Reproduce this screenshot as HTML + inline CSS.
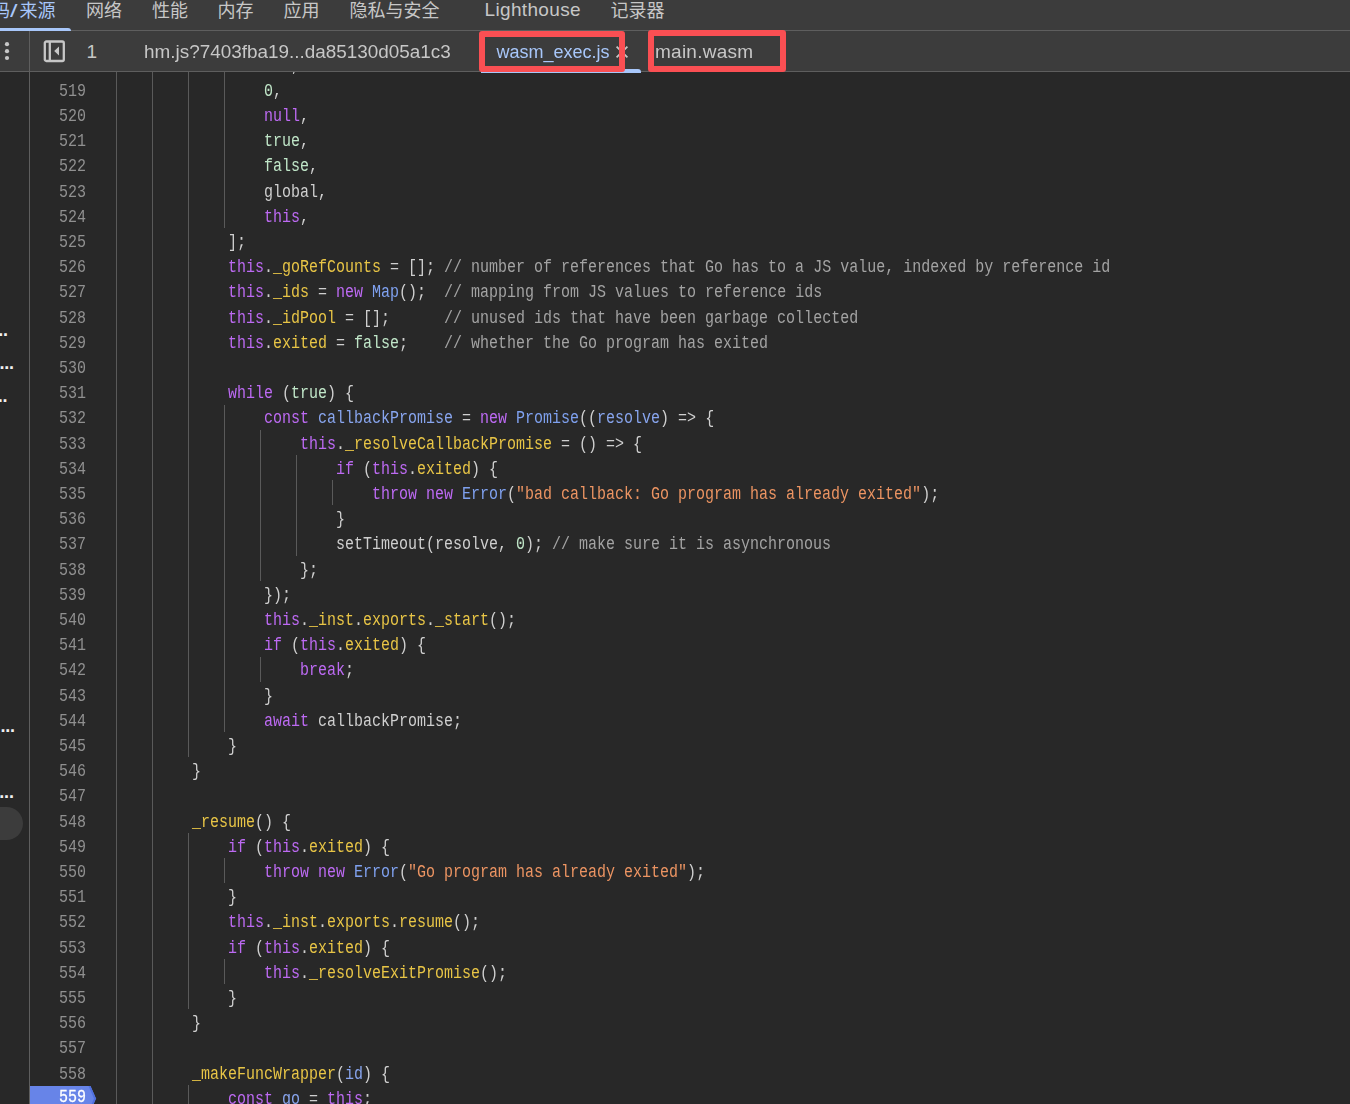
<!DOCTYPE html>
<html lang="zh-CN"><head><meta charset="utf-8"><title>DevTools - wasm_exec.js</title>
<style>
*{box-sizing:border-box;margin:0;padding:0}
html,body{width:1350px;height:1104px;overflow:hidden;background:#282828}
body{position:relative;font-family:"Liberation Sans","Noto Sans CJK SC",sans-serif;color:#c7c7c7}
.abs{position:absolute}
#code{position:absolute;left:0;top:0;width:1350px;height:1104px;overflow:hidden;will-change:transform}
.ln{position:absolute;left:59px;width:40px;text-align:left;transform:scaleX(.83333);transform-origin:0 0;height:25.2px;line-height:25.2px;font-family:"Liberation Mono","Noto Sans CJK SC",monospace;font-size:18px;letter-spacing:0;color:#909090;white-space:pre}
.cl{position:absolute;transform:scaleX(.83333);transform-origin:0 0;height:25.2px;line-height:25.2px;font-family:"Liberation Mono","Noto Sans CJK SC",monospace;font-size:18px;letter-spacing:0;color:#cfcfcf;white-space:pre}
.k{color:#bd6af3}.p{color:#e8c546}.d{color:#88a5ee}.t{color:#7fa1ef}.n{color:#c0e6c8}.s{color:#ec9462}.c{color:#a3a3a3}
.g{position:absolute;width:1px;background:#5a5a5a}
#topbar{position:absolute;left:0;top:0;width:1350px;height:30px;background:#3c3c3c}
#bar2{position:absolute;left:0;top:31px;width:1350px;height:40px;background:#3c3c3c}
.hl{position:absolute;left:0;width:1350px;height:1px;background:#5e5e5e}
.tab{position:absolute;top:0;height:22px;line-height:22px;font-size:18px;white-space:pre;color:#c7c7c7}
.ft{position:absolute;top:41px;height:22px;line-height:22px;font-size:18px;white-space:pre;color:#c7c7c7}
.red{position:absolute;border:6px solid #fa4f53;border-radius:3px}
.dots{position:absolute;font-weight:bold;font-size:18px;line-height:20px;height:20px;color:#f0f0f0;white-space:pre;letter-spacing:-0.15px;font-family:"Liberation Sans",sans-serif}
</style></head><body>
<div id="code">

<div class="g" style="left:116px;top:72px;height:1032px"></div>
<div class="g" style="left:152px;top:72px;height:1032px"></div>
<div class="g" style="left:224px;top:51.8px;height:176.4px"></div>
<div class="g" style="left:224px;top:404.6px;height:327.6px"></div>
<div class="g" style="left:260px;top:429.8px;height:151.2px"></div>
<div class="g" style="left:296px;top:455.0px;height:100.8px"></div>
<div class="g" style="left:332px;top:480.2px;height:25.2px"></div>
<div class="g" style="left:260px;top:656.6px;height:25.2px"></div>
<div class="g" style="left:224px;top:858.2px;height:25.2px"></div>
<div class="g" style="left:224px;top:959.0px;height:25.2px"></div>
<div class="g" style="left:188px;top:26.6px;height:730.8px"></div>
<div class="g" style="left:188px;top:833.0px;height:176.4px"></div>
<div class="g" style="left:188px;top:1085.0px;height:50.4px"></div>
<div class="ln" style="top:53.5px">518</div>
<div class="cl" style="left:264px;top:53.5px"><span class="n">NaN</span>,</div>
<div class="ln" style="top:78.7px">519</div>
<div class="cl" style="left:264px;top:78.7px"><span class="n">0</span>,</div>
<div class="ln" style="top:103.9px">520</div>
<div class="cl" style="left:264px;top:103.9px"><span class="k">null</span>,</div>
<div class="ln" style="top:129.1px">521</div>
<div class="cl" style="left:264px;top:129.1px"><span class="n">true</span>,</div>
<div class="ln" style="top:154.3px">522</div>
<div class="cl" style="left:264px;top:154.3px"><span class="n">false</span>,</div>
<div class="ln" style="top:179.5px">523</div>
<div class="cl" style="left:264px;top:179.5px">global,</div>
<div class="ln" style="top:204.7px">524</div>
<div class="cl" style="left:264px;top:204.7px"><span class="k">this</span>,</div>
<div class="ln" style="top:229.9px">525</div>
<div class="cl" style="left:228px;top:229.9px">];</div>
<div class="ln" style="top:255.1px">526</div>
<div class="cl" style="left:228px;top:255.1px"><span class="k">this</span>.<span class="p">_goRefCounts</span> = []; <span class="c">// number of references that Go has to a JS value, indexed by reference id</span></div>
<div class="ln" style="top:280.3px">527</div>
<div class="cl" style="left:228px;top:280.3px"><span class="k">this</span>.<span class="p">_ids</span> = <span class="k">new</span> <span class="t">Map</span>();  <span class="c">// mapping from JS values to reference ids</span></div>
<div class="ln" style="top:305.5px">528</div>
<div class="cl" style="left:228px;top:305.5px"><span class="k">this</span>.<span class="p">_idPool</span> = [];      <span class="c">// unused ids that have been garbage collected</span></div>
<div class="ln" style="top:330.7px">529</div>
<div class="cl" style="left:228px;top:330.7px"><span class="k">this</span>.<span class="p">exited</span> = <span class="n">false</span>;    <span class="c">// whether the Go program has exited</span></div>
<div class="ln" style="top:355.9px">530</div>
<div class="ln" style="top:381.1px">531</div>
<div class="cl" style="left:228px;top:381.1px"><span class="k">while</span> (<span class="n">true</span>) {</div>
<div class="ln" style="top:406.3px">532</div>
<div class="cl" style="left:264px;top:406.3px"><span class="k">const</span> <span class="d">callbackPromise</span> = <span class="k">new</span> <span class="t">Promise</span>((<span class="d">resolve</span>) =&gt; {</div>
<div class="ln" style="top:431.5px">533</div>
<div class="cl" style="left:300px;top:431.5px"><span class="k">this</span>.<span class="p">_resolveCallbackPromise</span> = () =&gt; {</div>
<div class="ln" style="top:456.7px">534</div>
<div class="cl" style="left:336px;top:456.7px"><span class="k">if</span> (<span class="k">this</span>.<span class="p">exited</span>) {</div>
<div class="ln" style="top:481.9px">535</div>
<div class="cl" style="left:372px;top:481.9px"><span class="k">throw</span> <span class="k">new</span> <span class="t">Error</span>(<span class="s">"bad callback: Go program has already exited"</span>);</div>
<div class="ln" style="top:507.1px">536</div>
<div class="cl" style="left:336px;top:507.1px">}</div>
<div class="ln" style="top:532.3px">537</div>
<div class="cl" style="left:336px;top:532.3px">setTimeout(resolve, <span class="n">0</span>); <span class="c">// make sure it is asynchronous</span></div>
<div class="ln" style="top:557.5px">538</div>
<div class="cl" style="left:300px;top:557.5px">};</div>
<div class="ln" style="top:582.7px">539</div>
<div class="cl" style="left:264px;top:582.7px">});</div>
<div class="ln" style="top:607.9px">540</div>
<div class="cl" style="left:264px;top:607.9px"><span class="k">this</span>.<span class="p">_inst</span>.<span class="p">exports</span>.<span class="p">_start</span>();</div>
<div class="ln" style="top:633.1px">541</div>
<div class="cl" style="left:264px;top:633.1px"><span class="k">if</span> (<span class="k">this</span>.<span class="p">exited</span>) {</div>
<div class="ln" style="top:658.3px">542</div>
<div class="cl" style="left:300px;top:658.3px"><span class="k">break</span>;</div>
<div class="ln" style="top:683.5px">543</div>
<div class="cl" style="left:264px;top:683.5px">}</div>
<div class="ln" style="top:708.7px">544</div>
<div class="cl" style="left:264px;top:708.7px"><span class="k">await</span> callbackPromise;</div>
<div class="ln" style="top:733.9px">545</div>
<div class="cl" style="left:228px;top:733.9px">}</div>
<div class="ln" style="top:759.1px">546</div>
<div class="cl" style="left:192px;top:759.1px">}</div>
<div class="ln" style="top:784.3px">547</div>
<div class="ln" style="top:809.5px">548</div>
<div class="cl" style="left:192px;top:809.5px"><span class="p">_resume</span>() {</div>
<div class="ln" style="top:834.7px">549</div>
<div class="cl" style="left:228px;top:834.7px"><span class="k">if</span> (<span class="k">this</span>.<span class="p">exited</span>) {</div>
<div class="ln" style="top:859.9px">550</div>
<div class="cl" style="left:264px;top:859.9px"><span class="k">throw</span> <span class="k">new</span> <span class="t">Error</span>(<span class="s">"Go program has already exited"</span>);</div>
<div class="ln" style="top:885.1px">551</div>
<div class="cl" style="left:228px;top:885.1px">}</div>
<div class="ln" style="top:910.3px">552</div>
<div class="cl" style="left:228px;top:910.3px"><span class="k">this</span>.<span class="p">_inst</span>.<span class="p">exports</span>.<span class="p">resume</span>();</div>
<div class="ln" style="top:935.5px">553</div>
<div class="cl" style="left:228px;top:935.5px"><span class="k">if</span> (<span class="k">this</span>.<span class="p">exited</span>) {</div>
<div class="ln" style="top:960.7px">554</div>
<div class="cl" style="left:264px;top:960.7px"><span class="k">this</span>.<span class="p">_resolveExitPromise</span>();</div>
<div class="ln" style="top:985.9px">555</div>
<div class="cl" style="left:228px;top:985.9px">}</div>
<div class="ln" style="top:1011.1px">556</div>
<div class="cl" style="left:192px;top:1011.1px">}</div>
<div class="ln" style="top:1036.3px">557</div>
<div class="ln" style="top:1061.5px">558</div>
<div class="cl" style="left:192px;top:1061.5px"><span class="p">_makeFuncWrapper</span>(<span class="d">id</span>) {</div>
<div class="cl" style="left:228px;top:1086.7px"><span class="k">const</span> <span class="d">go</span> = <span class="k">this</span>;</div>
</div>
<!-- left panel -->
<div class="abs" style="left:0;top:72px;width:29px;height:1032px;background:#282828"></div>
<div class="abs" style="left:29px;top:31px;width:1px;height:1073px;background:#5e5e5e;z-index:5"></div>
<div class="dots" style="top:319.8px;left:-6.6px">...</div>
<div class="dots" style="top:353.3px;left:-0.6px">...</div>
<div class="dots" style="top:385.8px;left:-7.2px">...</div>
<div class="dots" style="top:715.8px;left:0.4px">...</div>
<div class="dots" style="top:781.8px;left:-0.8px">...</div>
<div class="abs" style="left:-20px;top:807px;width:43px;height:33px;border-radius:17px;background:#3c3c3c"></div>

<!-- breakpoint marker line 559 -->
<svg class="abs" style="left:30px;top:1086px" width="70" height="26" viewBox="0 0 70 26">
  <path d="M0 0H60.5L66 12.6L60.5 25.2H0Z" fill="#6784e8"/>
  <path d="M58.5 0H60.5L66 12.6L60.5 25.2H58.5L64 12.6Z" fill="#4f70e0"/>
</svg>
<div class="ln" style="top:1085.2px;color:#fff;-webkit-text-stroke:0.3px #fff">559</div>

<!-- top bar -->
<div id="topbar"></div>
<div class="hl" style="top:30px"></div>
<div class="tab" style="left:-8px;color:#a8c7fa">码<span style="display:inline-block;width:9.4px;transform:scaleX(1.5);transform-origin:0 50%">/</span>来源</div>
<div class="tab" style="left:86px">网络</div>
<div class="tab" style="left:152px">性能</div>
<div class="tab" style="left:217.5px">内存</div>
<div class="tab" style="left:283.5px">应用</div>
<div class="tab" style="left:349.5px">隐私与安全</div>
<div class="tab" style="left:484.5px;top:-0.6px;font-size:19px;letter-spacing:.35px" id="lh">Lighthouse</div>
<div class="tab" style="left:610.5px">记录器</div>
<div class="abs" style="left:0;top:28px;width:71px;height:3px;background:#a8c7fa;border-radius:0 3px 0 0"></div>

<!-- second bar -->
<div id="bar2"></div>
<div class="hl" style="top:71px"></div>
<div class="abs" style="left:29px;top:31px;width:1px;height:41px;background:#5e5e5e"></div>
<!-- kebab -->
<svg class="abs" style="left:2px;top:40px" width="10" height="22" viewBox="0 0 10 22">
  <circle cx="5" cy="4.2" r="2.1" fill="#c7c7c7"/><circle cx="5" cy="11.2" r="2.1" fill="#c7c7c7"/><circle cx="5" cy="18" r="2.1" fill="#c7c7c7"/>
</svg>
<!-- sidebar toggle icon -->
<svg class="abs" style="left:43px;top:40px" width="23" height="23" viewBox="0 0 23 23">
  <rect x="1.8" y="1.5" width="19" height="19.5" rx="1.5" fill="none" stroke="#c7c7c7" stroke-width="2.3"/>
  <line x1="6.8" y1="1.5" x2="6.8" y2="21" stroke="#c7c7c7" stroke-width="2.3"/>
  <path d="M16 6.5V15.5L11.2 11Z" fill="#c7c7c7"/>
</svg>
<div class="ft" style="left:86.5px;font-size:19px">1</div>
<div class="ft" style="left:144px;font-size:18.9px" id="f1">hm.js?7403fba19...da85130d05a1c3</div>
<div class="abs" style="left:481px;top:69px;width:160px;height:3.7px;background:#a8c7fa;border-radius:0 3px 0 0"></div>
<div class="ft" style="left:496.5px;color:#a8c7fa" id="f2">wasm_exec.js</div>
<svg class="abs" style="left:614px;top:44px" width="16" height="16" viewBox="0 0 16 16"><path d="M2.6 2.6L13.4 13.4M13.4 2.6L2.6 13.4" stroke="#c7c7c7" stroke-width="1.8" fill="none"/></svg>
<div class="ft" style="left:655px;font-size:19px;letter-spacing:.25px" id="f3">main.wasm</div>
<div class="red" style="left:479px;top:31.4px;width:146px;height:40.3px"></div>
<div class="red" style="left:648px;top:30px;width:138px;height:42px"></div>
</body></html>
